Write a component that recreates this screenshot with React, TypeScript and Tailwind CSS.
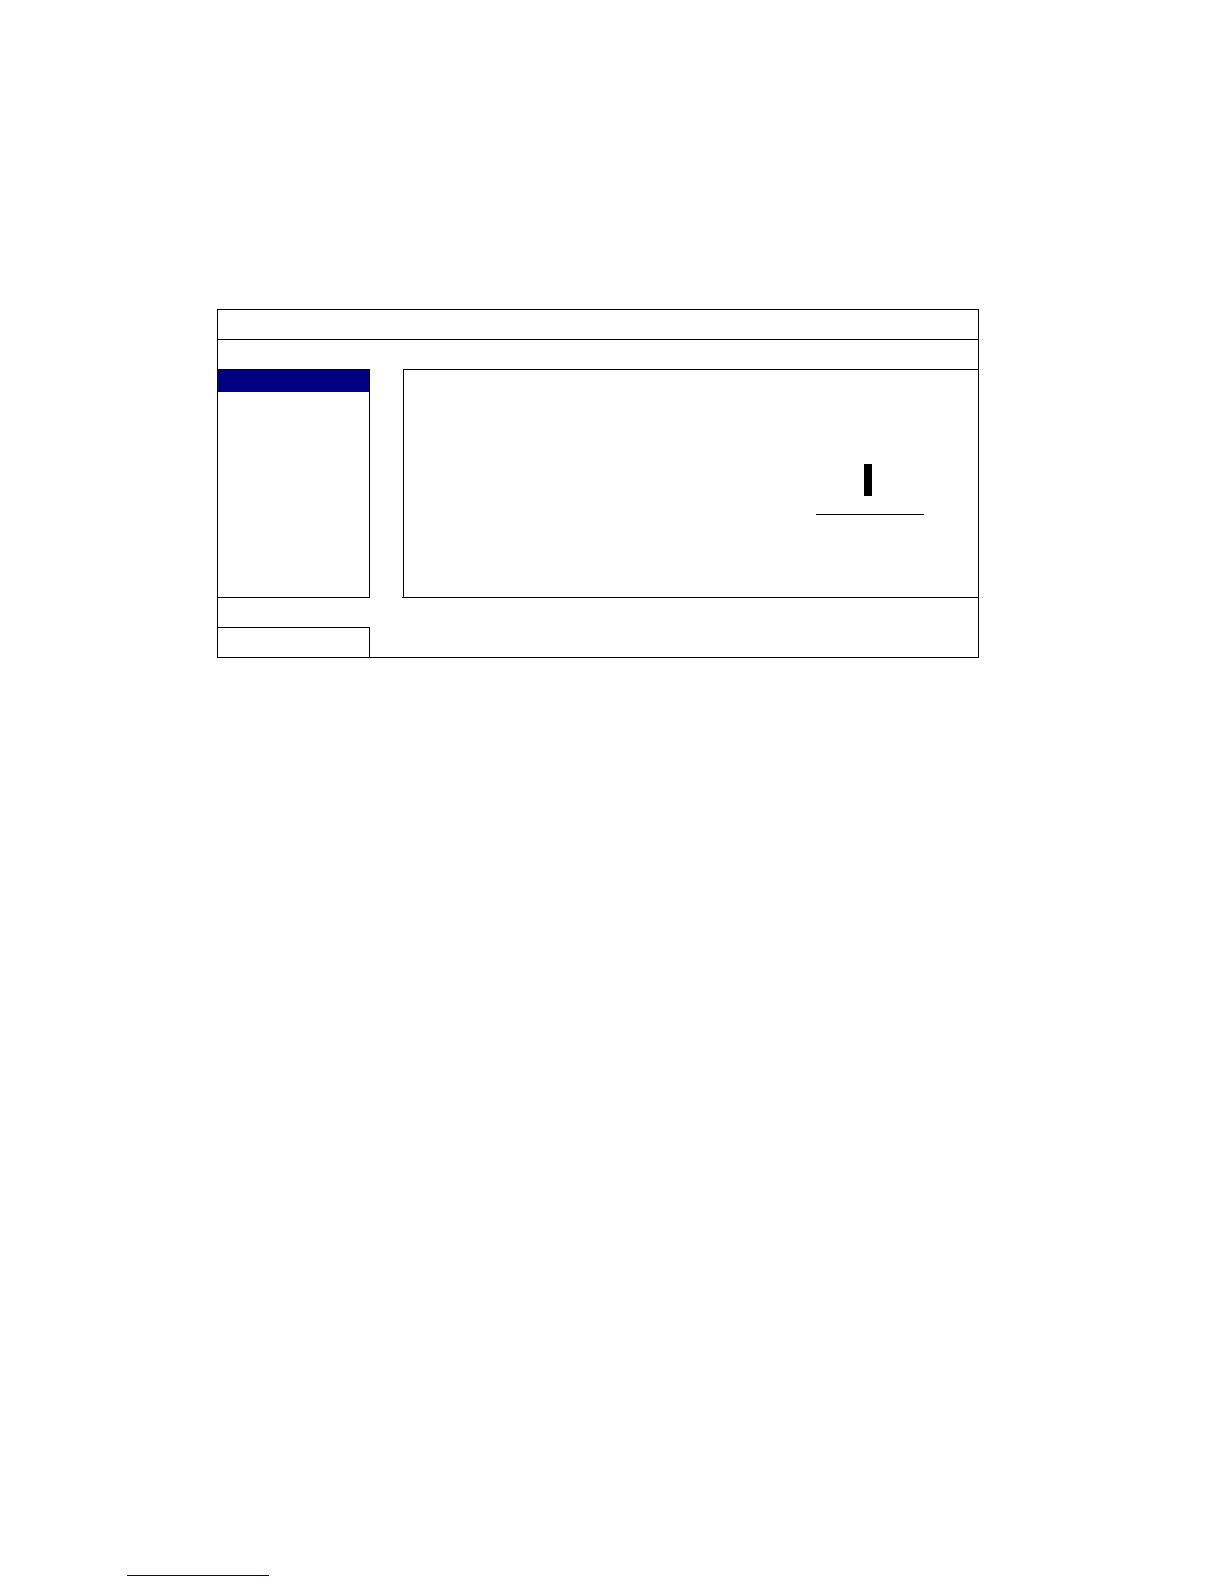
const Sidebar = () => {
    return (
        <aside className="w-[152px] shrink-0 border-t border-r border-b border-black">
            <div className="h-[22px] bg-[#000080]"></div>
        </aside>
    );
};

const DisplayPanel = () => {
    return (
        <section className="grow border-b border-black pl-px">
            <div className="flex justify-end border-t border-l border-black pt-[94px] pr-[54px] pb-[82px]">
                <div className="w-[108px] border-b border-black pb-[18px] pl-12">
                    <div className="h-8 w-2 bg-black"></div>
                </div>
            </div>
        </section>
    );
};

export default function App() {
    return (
        <div className="flex min-h-screen flex-col justify-between bg-white pt-[309px] pb-2 font-['Liberation_Sans',sans-serif]">
            <main className="mr-[245px] ml-[217px] border border-black">
                <header className="h-[30px] border-b border-black"></header>
                <div className="h-[29px]"></div>

                <div className="flex gap-8">
                    <Sidebar />
                    <DisplayPanel />
                </div>

                {/* status cell sits in the lower left corner of the frame */}
                <div className="pt-[29px]">
                    <div className="h-[30px] w-[152px] border-t border-r border-black"></div>
                </div>
            </main>

            <footer className="px-[127px]">
                <div className="w-[142px] border-b border-[#000080]"></div>
            </footer>
        </div>
    );
}
